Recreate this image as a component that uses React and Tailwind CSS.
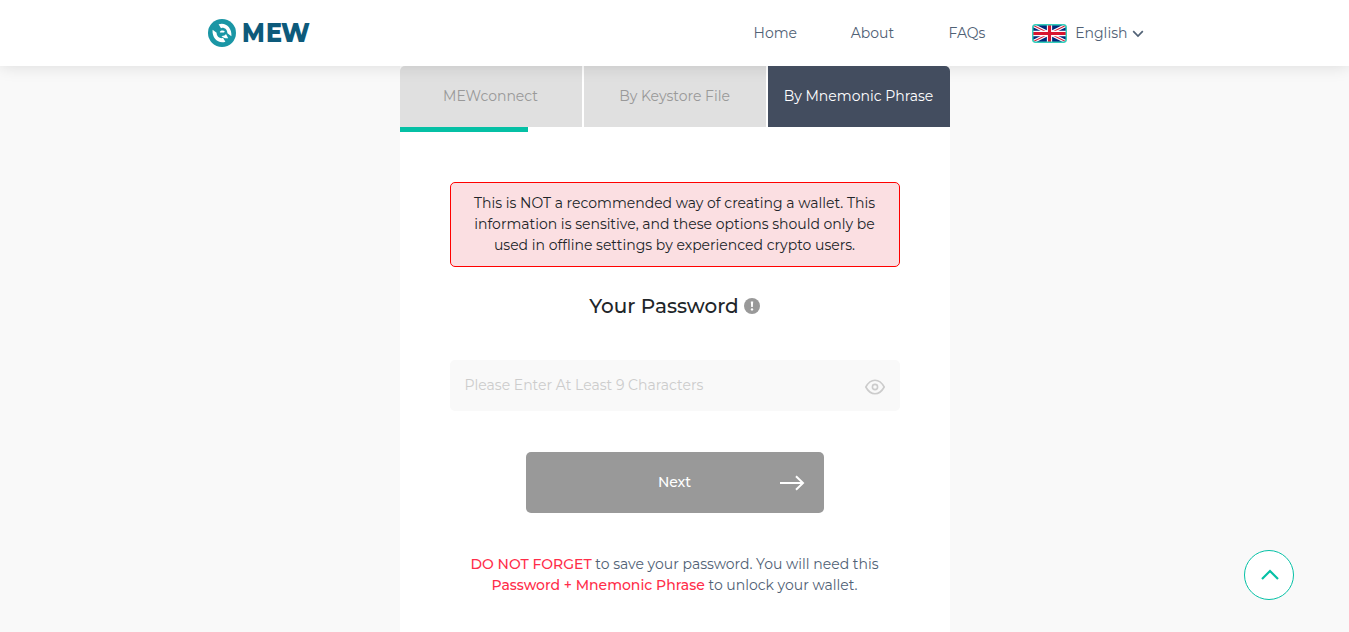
function Logo() {
  return (
    <div className="flex h-[30px] items-center gap-[5px]">
      <svg width="30" height="30" viewBox="0 0 30 30">
        <circle cx="15" cy="15" r="14" fill="#1a96a5" />
        <path
          d="M11.6 6.2C18.6 3.8 25.2 9.6 24.4 18.2L20.4 15.2C20.4 12 18.2 9.8 15.2 9.8L14 10.2Z"
          fill="#fff"
        />
        <path
          d="M18.4 23.8C11.4 26.2 4.8 20.4 5.6 11.8L9.6 14.8C9.6 18 11.8 20.2 14.8 20.2L16 19.8Z"
          fill="#fff"
        />
        <path d="M12.8 13.8C14 12.2 16.4 12 17.8 13.4L17 14.6H13Z" fill="#fff" />
        <path d="M14.4 18C16.6 18.2 18.2 17.2 19 16L21.2 20.2C18.8 20.8 16.2 19.8 14.4 18Z" fill="#fff" />
      </svg>
      <span className="flex text-[26.5px] leading-[30px] font-extrabold text-[#0d5a7b]">
        <span className="inline-block w-[23.7px] origin-left scale-x-[0.9]">M</span>
        <span className="inline-block w-[15.4px] origin-left scale-x-[0.9]">E</span>
        <span className="inline-block origin-left scale-x-[0.92]">W</span>
      </span>
    </div>
  );
}

function Flag() {
  return (
    <svg width="35" height="19" viewBox="0 0 36 19" preserveAspectRatio="none">
      <rect x="0.75" y="0.75" width="34.5" height="17.5" rx="2.5" fill="#012a7d" />
      <path d="M1.5 1.5L34.5 17.5M34.5 1.5L1.5 17.5" stroke="#fff" strokeWidth="3.4" />
      <path d="M1.5 1.5L34.5 17.5M34.5 1.5L1.5 17.5" stroke="#d8203a" strokeWidth="1.1" />
      <path d="M18 1V18M1 9.5H35" stroke="#fff" strokeWidth="5.4" />
      <path d="M18 1V18M1 9.5H35" stroke="#d8152f" strokeWidth="3.2" />
      <rect x="0.75" y="0.75" width="34.5" height="17.5" rx="3" fill="none" stroke="#35cdbb" strokeWidth="1.5" />
    </svg>
  );
}

function Header() {
  return (
    <header className="relative z-10 flex h-[66px] shrink-0 items-center bg-white pl-[207px] text-[14px] text-[#506175] shadow-[0_0_16px_rgba(0,0,0,0.13)]">
      <Logo />
      <nav className="ml-auto flex items-center pr-[205.5px] whitespace-nowrap">
        <span className="w-[97.2px]">Home</span>
        <span className="w-[97.8px]">About</span>
        <span className="w-[83.5px]">FAQs</span>
        <Flag />
        <span className="ml-[8.2px] w-[56.3px]">English</span>
        <svg className="mt-[2px]" width="12" height="8" viewBox="0 0 12 8" fill="none" stroke="#506175" strokeWidth="1.7">
          <path d="M1.2 1.2L6 6L10.8 1.2" />
        </svg>
      </nav>
    </header>
  );
}

export default function App() {
  return (
    <div className="flex h-[632px] flex-col overflow-hidden bg-[#f9f9f9] font-['Montserrat','Inter',sans-serif] text-[14px]">
      <Header />
      <main className="mx-auto h-[566px] w-[550px] bg-white">
        <div className="grid h-[61px] grid-cols-3 gap-[2px] bg-white text-center leading-[60px] whitespace-nowrap">
          <div className="rounded-tl-[5px] bg-[#e0e0e0] text-[#999]">MEWconnect</div>
          <div className="bg-[#e0e0e0] text-[#999]">By Keystore File</div>
          <div className="relative z-20 rounded-tr-[5px] bg-[#434d5f] text-white">By Mnemonic Phrase</div>
        </div>
        <div className="h-[5px] w-[128px] bg-[#05c0a5]" />
        <div className="flex flex-col items-center px-[50px] pt-[50px]">
          <div className="h-[85px] w-[450px] rounded-[5px] border border-[#ff0000] bg-[#fbdfe2] pt-[10px] text-center leading-[21px] whitespace-nowrap text-[#212529]">
            <p>This is NOT a recommended way of creating a wallet. This</p>
            <p>information is sensitive, and these options should only be</p>
            <p>used in offline settings by experienced crypto users.</p>
          </div>
          <div className="mt-[24px] flex h-[30px] items-center gap-[5px]">
            <h3 className="text-[20px] leading-[30px] font-medium text-[#212529]">Your Password</h3>
            <svg width="16" height="16" viewBox="0 0 16 16">
              <circle cx="8" cy="8" r="8" fill="#999" />
              <path d="M6.8 3.5H9.2L8.8 9H7.2Z" fill="#fff" />
              <circle cx="8" cy="11.4" r="1.2" fill="#fff" />
            </svg>
          </div>
          <div className="mt-[39px] flex h-[51px] w-full items-center rounded-[5px] bg-[#f9f9f9] px-[15px] leading-[50px] whitespace-nowrap text-[#ccc]">
            <span className="mb-[2px]">Please Enter At Least 9 Characters</span>
            <svg className="mt-[3px] ml-auto" width="20" height="16" viewBox="0 0 20 16" fill="none" stroke="#ccc" strokeWidth="1.6">
              <path d="M0.8 8C3.2 3.6 6.3 1.2 10 1.2S16.8 3.6 19.2 8C16.8 12.4 13.7 14.8 10 14.8S3.2 12.4 0.8 8Z" />
              <circle cx="10" cy="8" r="2.6" />
            </svg>
          </div>
          <button className="mt-[41px] grid h-[61px] w-[298px] grid-cols-[1fr_auto_1fr] items-center rounded-[5px] bg-[#999] pr-[19px] pl-[19px] font-medium text-white">
            <span />
            <span>Next</span>
            <svg className="mt-px justify-self-end" width="26" height="16" viewBox="0 0 26 16" fill="none" stroke="#fff" strokeWidth="2">
              <path d="M1 8H24M17 1.2L24 8L17 14.8" />
            </svg>
          </button>
          <div className="mt-[41px] text-center leading-[21px] whitespace-nowrap text-[#506175]">
            <p><span className="font-medium text-[#ff2d49]">DO NOT FORGET</span> to save your password. You will need this</p>
            <p><span className="font-medium text-[#ff2d49]">Password + Mnemonic Phrase</span> to unlock your wallet.</p>
          </div>
        </div>
      </main>
      <button className="fixed right-[55px] bottom-[32px] flex size-[50px] items-center justify-center rounded-full border border-[#05c0a5] bg-white">
        <svg className="-mt-[2px] ml-[1px]" width="18" height="11" viewBox="0 0 18 11" fill="none" stroke="#05c0a5" strokeWidth="2.2">
          <path d="M1 10L9 2L17 10" />
        </svg>
      </button>
    </div>
  );
}
